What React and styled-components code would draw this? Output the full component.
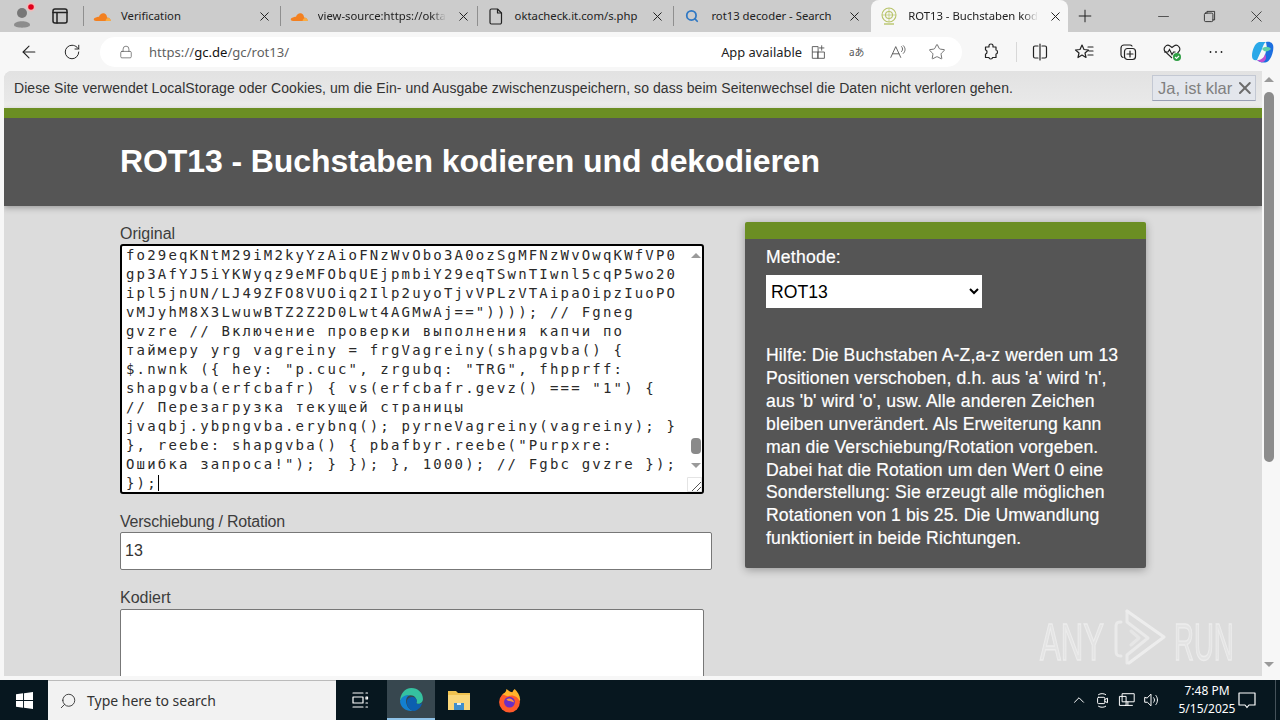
import React from "react";
import styled, { createGlobalStyle } from "styled-components";
import { ArrowLeft, RotateCw, Lock, X, Plus, Minus, Star, Search, ChevronUp } from "lucide-react";

const Global = createGlobalStyle`
  html, body { margin: 0; padding: 0; overflow: hidden; }
  body { font-family: "Liberation Sans", Arial, sans-serif; }
  * { box-sizing: border-box; }
`;

const Shell = styled.div`
  width: 1280px;
  height: 720px;
  display: flex;
  flex-direction: column;
  position: relative;
  overflow: hidden;
  background: #f7f7f7;
`;

/* barra de pestanas */
const TabStrip = styled.div`
  height: 32px;
  flex: none;
  display: flex;
  align-items: stretch;
  background: #cccccc;
  font-family: "Noto Sans", sans-serif;
  font-size: 11.3px;
  color: #222;
`;
const StripLeft = styled.div`
  width: 84px;
  flex: none;
  display: flex;
  align-items: center;
  padding-left: 10px;
  gap: 14px;
  position: relative;
  &::after {
    content: "";
    position: absolute;
    right: 0;
    top: 6px;
    height: 20px;
    width: 1px;
    background: #8f8f8f;
  }
`;
const Tab = styled.div`
  width: 196.8px;
  flex: none;
  display: flex;
  align-items: center;
  padding: 0 9px;
  gap: 10px;
  position: relative;
  background: ${p => (p.$active ? "#f7f7f7" : "transparent")};
  border-radius: ${p => (p.$active ? "8px 8px 0 0" : "0")};
  &::after {
    content: "";
    display: ${p => (p.$sep ? "block" : "none")};
    position: absolute;
    right: 0;
    top: 6px;
    height: 20px;
    width: 1px;
    background: #8f8f8f;
  }
`;
const FavSlot = styled.span`
  width: 18px;
  flex: none;
  display: flex;
  justify-content: center;
`;
const TabTitle = styled.span`
  flex: 1;
  margin-bottom: 2px;
  white-space: nowrap;
  -webkit-mask-image: ${p => (p.$fade ? "linear-gradient(to right, #000 88%, transparent 100%)" : "none")};
  mask-image: ${p => (p.$fade ? "linear-gradient(to right, #000 88%, transparent 100%)" : "none")};
`;
const TabSpacer = styled.div`
  flex: 1;
  display: flex;
  align-items: center;
  padding-left: 7px;
`;
const WinButtons = styled.div`
  margin-left: auto;
  display: flex;
  align-items: center;
  gap: 29px;
  padding-right: 14px;
  color: #222;
`;

/* barra de direccion */
const Toolbar = styled.div`
  height: 39px;
  flex: none;
  display: flex;
  align-items: center;
  background: #f7f7f7;
  padding-left: 19px;
  color: #222;
`;
const NavIcons = styled.div`
  width: 81px;
  flex: none;
  display: flex;
  align-items: center;
  gap: 24px;
`;
const Address = styled.div`
  width: 862px;
  height: 30px;
  flex: none;
  display: flex;
  align-items: center;
  background: #fff;
  border-radius: 15px;
  padding: 0 16px 0 19px;
  font-family: "Noto Sans", sans-serif;
`;
const Url = styled.span`
  margin-left: 16px;
  color: #5f5f5f;
  font-size: 13.1px;
  b { color: #111; font-weight: 400; }
`;
const AppAvail = styled.span`
  margin-left: auto;
  font-size: 12.9px;
  color: #222;
  margin-right: 7.5px;
`;
const AddressIcons = styled.div`
  display: flex;
  align-items: center;
  gap: 21.5px;
  color: #555;
`;
const ToolIcons = styled.div`
  display: flex;
  align-items: center;
  margin-left: 19px;
  gap: 24px;
`;
const ToolSep = styled.div`
  width: 1px;
  height: 20px;
  background: #d8d8d8;
  margin: 0 -11px 0 -9px;
`;

/* viewport */
const Viewport = styled.div`
  flex: 1;
  min-height: 0;
  display: flex;
  padding: 0 4px 4px 4px;
`;
const Page = styled.div`
  width: 1258px;
  flex: none;
  overflow: hidden;
  background: #dcdcdc;
  border-radius: 8px 0 0 0;
`;
const CookieBar = styled.div`
  height: 37px;
  display: flex;
  align-items: center;
  justify-content: space-between;
  padding: 0 6px 3px 10px;
  background: linear-gradient(#e2e2e2, #e8e8e8 80%, #f1f1ef);
  font-size: 14px;
  letter-spacing: 0.065px;
  color: #333;
`;
const KlarButton = styled.div`
  width: 104px;
  height: 26px;
  display: flex;
  align-items: center;
  gap: 3px;
  padding-left: 5px;
  background: #e3e6ec;
  border: 1px solid #c3c8d3;
  border-bottom-color: #9aa0b4;
  font-size: 16.5px;
  letter-spacing: 0;
  color: #808080;
  white-space: nowrap;
`;
const Hero = styled.header`
  height: 98px;
  background: #555555;
  border-top: 10px solid #6b8e23;
  box-shadow: 0 2px 6px rgba(0, 0, 0, 0.3);
  padding: 24px 0 0 116px;
  position: relative;
`;
const Title = styled.h1`
  margin: 0;
  font-size: 32px;
  line-height: 38px;
  font-weight: 700;
  letter-spacing: -0.1px;
  color: #fff;
`;
const Columns = styled.div`
  display: flex;
  align-items: flex-start;
  gap: 33px;
  padding: 16px 0 0 116px;
`;
const LeftCol = styled.div`
  width: 592px;
  flex: none;
  padding-top: 2px;
`;
const Label = styled.label`
  display: block;
  height: 20px;
  font-size: 16px;
  line-height: 20px;
  color: #3c3c3c;
  margin-top: ${p => p.$top || 0}px;
  letter-spacing: ${p => (p.$tight ? "-0.22px" : "0")};
`;
const CodeBox = styled.div`
  width: 584px;
  height: 250px;
  display: flex;
  background: #fff;
  border: 2px solid #000;
  border-radius: 3px;
  overflow: hidden;
  position: relative;
`;
const CodeText = styled.div`
  flex: 1;
  padding: 0 0 0 4px;
  font-family: "DejaVu Sans Mono", monospace;
  font-size: 14px;
  letter-spacing: 2.17px;
  line-height: 19px;
  color: #2a2a2a;
  white-space: pre;
  overflow: hidden;
`;
const Caret = styled.span`
  display: inline-block;
  width: 1px;
  height: 16px;
  background: #000;
  vertical-align: -3px;
`;
const InnerBar = styled.div`
  width: 16px;
  flex: none;
  position: relative;
`;
const InnerThumb = styled.div`
  position: absolute;
  left: 5px;
  top: 192px;
  width: 10px;
  height: 16px;
  border-radius: 4px;
  background: #8a8a8a;
`;
const Arrow = styled.div`
  position: absolute;
  left: ${p => p.$left}px;
  ${p => (p.$down ? `bottom: ${p.$at}px;` : `top: ${p.$at}px;`)}
  width: 0;
  height: 0;
  border-left: 5px solid transparent;
  border-right: 5px solid transparent;
  ${p => (p.$down ? "border-top" : "border-bottom")}: 5px solid #9a9a9a;
`;
const Grip = styled.svg`
  position: absolute;
  right: 0;
  bottom: 0;
`;
const ShiftInput = styled.input`
  display: block;
  width: 592px;
  height: 38px;
  padding: 0 4px;
  font-family: "Liberation Sans", sans-serif;
  font-size: 16px;
  color: #333;
  background: #fff;
  border: 1px solid #777;
  border-radius: 2px;
  outline: none;
`;
const OutBox = styled.textarea`
  display: block;
  width: 584px;
  height: 130px;
  margin-top: 1px;
  background: #fff;
  border: 1px solid #777;
  border-radius: 2px;
  resize: none;
  outline: none;
`;
const Panel = styled.aside`
  width: 401px;
  flex: none;
  height: 346px;
  background: #555555;
  border-top: 17px solid #6b8e23;
  border-radius: 2px;
  box-shadow: 0 2px 8px rgba(0, 0, 0, 0.3);
  padding: 8px 21px 0;
  color: #fff;
  -webkit-text-stroke: 0.2px #fff;
`;
const MethodLabel = styled.div`
  font-size: 17.6px;
  letter-spacing: 0.2px;
  line-height: 20px;
`;
const MethodSelect = styled.select`
  display: block;
  width: 216px;
  height: 33px;
  margin-top: 8px;
  font-family: "Liberation Sans", sans-serif;
  font-size: 17.6px;
  color: #000;
  background: #fff;
  border: 0;
  border-radius: 0;
  padding-left: 1px;
  -webkit-text-stroke: 0;
`;
const Help = styled.p`
  margin: 36px 0 0;
  font-size: 17.6px;
  letter-spacing: 0.12px;
  line-height: 22.9px;
`;
const PageBar = styled.div`
  width: 14px;
  flex: none;
  background: #f7f7f7;
  position: relative;
`;
const PageThumb = styled.div`
  position: absolute;
  left: 2px;
  top: 21px;
  width: 10px;
  height: 370px;
  border-radius: 5px;
  background: #8c8c8c;
`;

/* barra de tareas */
const Taskbar = styled.div`
  height: 40px;
  flex: none;
  display: flex;
  align-items: center;
  background: #07171f;
  color: #fff;
  font-family: "Noto Sans", sans-serif;
`;
const StartCell = styled.div`
  width: 48px;
  flex: none;
  display: flex;
  justify-content: center;
`;
const SearchBox = styled.div`
  width: 288px;
  height: 40px;
  flex: none;
  display: flex;
  align-items: center;
  gap: 10px;
  padding-left: 11px;
  background: #f2f2f2;
  border-top: 1px solid #bbb;
  color: #333;
  font-size: 14px;
`;
const TaskCell = styled.div`
  width: ${p => p.$w || 48}px;
  height: 40px;
  flex: none;
  display: flex;
  align-items: center;
  justify-content: center;
  padding-right: ${p => p.$pr || 0}px;
  background: ${p => (p.$on ? "#37474f" : "transparent")};
  border-bottom: ${p => (p.$on ? "2px solid #8fc3e8" : "none")};
`;
const Tray = styled.div`
  margin-left: auto;
  display: flex;
  align-items: center;
  height: 40px;
`;
const TrayIcons = styled.div`
  display: flex;
  align-items: center;
  gap: 6px;
`;
const Clock = styled.div`
  width: 58px;
  margin-left: 18px;
  text-align: center;
  font-size: 12px;
  line-height: 18px;
  white-space: nowrap;
`;
const NotifyCell = styled.div`
  width: 22px;
  margin-right: 17px;
  display: flex;
  justify-content: center;
`;
const DesktopEdge = styled.div`
  width: 5px;
  height: 40px;
  border-left: 1px solid #45525a;
`;

/* marca de agua sobre la pagina */
const Watermark = styled.div`
  position: absolute;
  left: 1040px;
  top: 608px;
  display: flex;
  align-items: center;
  gap: 8px;
  pointer-events: none;
  opacity: 0.5;
`;
const WatermarkWord = styled.span`
  display: inline-block;
  width: ${p => p.$w}px;
  font-size: 52px;
  line-height: 62px;
  color: rgba(255, 255, 255, 0.45);
  -webkit-text-stroke: 1.4px rgba(255, 255, 255, 0.9);
  transform: translateY(3px) scaleX(${p => p.$sx});
  transform-origin: left center;
  white-space: nowrap;
`;

const Ico = ({ size = 18, sw = 1.2, children, color = "currentColor" }) => (
  <svg width={size} height={size} viewBox="0 0 20 20" fill="none" stroke={color} strokeWidth={sw} strokeLinecap="round" strokeLinejoin="round" style={{ flex: "none" }}>
    {children}
  </svg>
);

const CloudIcon = () => (
  <svg width="18" height="14" viewBox="0 0 18 12">
    <path d="M3 11 C0 11 0 8 3 7.6 C4 6.5 5.5 6.5 6 6.8 C7 3 11 2 13 4.5 C14 6 14 7 14 7.5 C16.5 7.5 18 9.5 17.5 11 Z" fill="#f38020" />
    <path d="M12.5 11 C13 9 14 7.8 15.5 8 C17 8.5 18 10 17.5 11 Z" fill="#fbad41" />
  </svg>
);

const PageIcon = () => (
  <svg width="14" height="17" viewBox="0 0 14 17" fill="none" stroke="#222" strokeWidth="1.2" strokeLinejoin="round">
    <path d="M2.500 1h6l4 4v9.500a1.500 1.500 0 0 1-1.500 1.500h-8.500a1.500 1.500 0 0 1-1.500-1.500v-12a1.500 1.500 0 0 1 1.500-1.500z" />
    <path d="M8.500 1v4h4" />
  </svg>
);

const RotFav = () => (
  <svg width="18" height="20" viewBox="0 0 18 20" fill="none" stroke="#b8c46a" strokeWidth="1.1">
    <circle cx="9" cy="9" r="7" />
    <circle cx="9" cy="9" r="3.5" />
    <path d="M9 2v14M2 9h14" strokeWidth="0.7" />
    <path d="M4 18h10" strokeWidth="1.4" />
  </svg>
);

const AvatarIcon = () => (
  <svg width="30" height="30" viewBox="0 0 30 30" style={{ flex: "none", marginLeft: -4 }}>
    <circle cx="16" cy="12" r="5" fill="#777" />
    <path d="M8 24 C8 19 24 19 24 24 C24 27.500 8 27.500 8 24 Z" fill="#8c8c8c" />
    <circle cx="25" cy="6" r="4.4" fill="#f4b8b8" />
    <circle cx="25" cy="6" r="2.8" fill="#e0001b" />
  </svg>
);

const EdgeIcon = () => (
  <svg width="25" height="25" viewBox="0 0 24 24">
    <path d="M12 1 C18 1 23 5.5 23 11.5 C23 15.5 19 17 16.5 15.5 C18 13 16 8 11 8 C6 8 2 11 1 14 C1 7 5.5 1 12 1 Z" fill="#35c1a0" />
    <path d="M1 14 C2 9 6.5 7.5 10 8 C7 9.5 6 13 7.5 17 C8.5 20 11 22.5 14 23 C7 24 1.5 20 1 14 Z" fill="#1380d0" />
    <path d="M7.5 14 C7.5 10 14 8 16.5 11.5 C17.5 13 17 15 16.5 15.5 C19 17 21 16.5 22.5 15 C21 20 17 23 14 23 C10 22.5 7.5 18 7.5 14 Z" fill="#0c5fb0" />
  </svg>
);

const FolderIcon = () => (
  <svg width="24" height="24" viewBox="0 0 24 24">
    <path d="M1 3h8l2 2h12v17H1z" fill="#f0c24f" />
    <path d="M1 7h22v15H1z" fill="#fad77a" />
    <rect x="7" y="15" width="10" height="7" fill="#3f8fcc" />
    <rect x="10" y="15" width="4" height="2" fill="#dfeefa" />
  </svg>
);

const FoxIcon = () => (
  <svg width="25" height="25" viewBox="0 0 24 24">
    <circle cx="12" cy="13.5" r="10" fill="#ff5a2a" />
    <path d="M5 6 C8 5 9 3 9 1 C12 3 13 4 15 4 C15 3 16 2 17 1 C20 4 23 8 22 13 C20 8 15 6 10 8 Z" fill="#ffb32b" />
    <circle cx="12" cy="13.5" r="5.2" fill="#6a2fc4" />
    <path d="M9 11 C12 9 16 11 16.5 14 C13 12.5 11 13 9 11 Z" fill="#ff9640" />
  </svg>
);

const CopilotIcon = () => (
  <svg width="26" height="26" viewBox="0 0 26 26" style={{ flex: "none" }}>
    <path d="M9 3 C5 4 2 11 2 17 C2 21 5 22 7 21 L12 10 C13 7 14 4 16 3 Z" fill="#2aa8e8" />
    <path d="M16 3 C19 2 22 3 23 6 C24.5 11 21 21 17 23 C14 24 10 24 7 21 C11 22 14 20 15 16 L17 9 Z" fill="#1c6fe0" />
    <path d="M12 10 C14 7 19 7 21 10 C19 12 16 13 14 12 Z" fill="#5fd0a8" />
    <path d="M7 21 C11 21 14 19 15 15 C17 18 16 22 13 23 C11 23.5 9 22.5 7 21 Z" fill="#c14fd0" />
  </svg>
);

const codeLines = [
  "fo29eqKNtM29iM2kyYzAioFNzWvObo3A0ozSgMFNzWvOwqKWfVP0",
  "gp3AfYJ5iYKWyqz9eMFObqUEjpmbiY29eqTSwnTIwnl5cqP5wo20",
  "ipl5jnUN/LJ49ZFO8VUOiq2Ilp2uyoTjvVPLzVTAipaOipzIuoPO",
  'vMJyhM8X3LwuwBTZ2Z2D0Lwt4AGMwAj==")))); // Fgneg',
  "gvzre // Включение проверки выполнения капчи по",
  "таймеру yrg vagreiny = frgVagreiny(shapgvba() {",
  '$.nwnk ({ hey: "p.cuc", zrgubq: "TRG", fhpprff:',
  'shapgvba(erfcbafr) { vs(erfcbafr.gevz() === "1") {',
  "// Перезагрузка текущей страницы",
  "jvaqbj.ybpngvba.erybnq(); pyrneVagreiny(vagreiny); }",
  '}, reebe: shapgvba() { pbafbyr.reebe("Purpxre:',
  'Ошибка запроса!"); } }); }, 1000); // Fgbc gvzre });',
];

const tabs = [
  { title: "Verification", icon: <CloudIcon />, sep: true },
  { title: "view-source:https://okta", icon: <CloudIcon />, sep: true, fade: true },
  { title: "oktacheck.it.com/s.php", icon: <PageIcon />, sep: true },
  { title: "rot13 decoder - Search", icon: <Search size={14} strokeWidth={3} color="#2f78c4" /> },
];

export default function App() {
  return (
    <Shell>
      <Global />
      <TabStrip>
        <StripLeft>
          <AvatarIcon />
          <Ico size={20} sw={1.5}>
            <rect x="3" y="3" width="14" height="14" rx="2" />
            <path d="M3 6.5h14M7 6.5V17" />
          </Ico>
        </StripLeft>
        {tabs.map(t => (
          <Tab key={t.title} $sep={t.sep}>
            <FavSlot>{t.icon}</FavSlot>
            <TabTitle $fade={t.fade}>{t.title}</TabTitle>
            <X size={15} strokeWidth={1.6} style={{ flex: "none" }} />
          </Tab>
        ))}
        <Tab $active>
          <FavSlot><RotFav /></FavSlot>
          <TabTitle $fade>ROT13 - Buchstaben kod</TabTitle>
          <X size={15} strokeWidth={1.6} style={{ flex: "none" }} />
        </Tab>
        <TabSpacer>
          <Plus size={20} strokeWidth={1.2} />
          <WinButtons>
            <Minus size={17} strokeWidth={1} />
            <Ico size={17} sw={1}>
              <rect x="4" y="6" width="10" height="10" rx="1.5" />
              <path d="M7 6V4h9v10h-2" />
            </Ico>
            <X size={19} strokeWidth={1} />
          </WinButtons>
        </TabSpacer>
      </TabStrip>

      <Toolbar>
        <NavIcons>
          <ArrowLeft size={20} strokeWidth={1.3} />
          <RotateCw size={18} strokeWidth={1.3} />
        </NavIcons>
        <Address>
          <Lock size={14} strokeWidth={1.2} color="#555" />
          <Url>https://<b>gc.de</b>/gc/rot13/</Url>
          <AppAvail>App available</AppAvail>
          <AddressIcons>
            <Ico size={18} sw={1}>
              <path d="M3 4h6v13H3zM9 10h7v7H9zM3 10h6M13 3v5M10.5 5.5h5" />
            </Ico>
            <Ico size={18} sw={1}>
              <text x="0" y="14" fontSize="11" stroke="none" fill="#555" fontFamily="Noto Sans, Noto Sans CJK JP">aあ</text>
            </Ico>
            <Ico size={18} sw={1}>
              <path d="M2 16 L7.5 4 L13 16 M4 12h7M14 4c1.5 1.5 1.5 4 0 5.5M16 3c2.5 2.5 2.5 6 0 8.5" />
            </Ico>
            <Star size={18} strokeWidth={1.1} />
          </AddressIcons>
        </Address>
        <ToolIcons>
          <Ico size={20} sw={1.2}>
            <path d="M8 3.5c0-2 4-2 4 0v1.5h3v3c2 0 2 4 0 4v3.5h-3.5c0 2-3.500 2-3.500 0H4.500v-3.500c2 0 2-4 0-4V5H8z" />
          </Ico>
          <ToolSep />
          <Ico size={20} sw={1.2}>
            <path d="M10 2v16M8 4H5a1.500 1.500 0 0 0-1.500 1.500v9A1.500 1.500 0 0 0 5 16h3M12 4h3a1.500 1.500 0 0 1 1.500 1.500v9A1.500 1.500 0 0 1 15 16h-3" />
          </Ico>
          <Ico size={20} sw={1.2}>
            <path d="M8 3 L10 7.500 L14.500 8 L11 11 L12 15.500 L8 13 L4 15.500 L5 11 L1.500 8 L6 7.500 Z M14 5h5M15 9h4M14 13h5" />
          </Ico>
          <Ico size={20} sw={1.2}>
            <path d="M5 15.500A3 3 0 0 1 3 13V6a3 3 0 0 1 3-3h6a2.500 2.500 0 0 1 2 1" />
            <rect x="6.500" y="6.500" width="11" height="11" rx="3" />
            <path d="M12 9v6M9 12h6" />
          </Ico>
          <svg width="20" height="20" viewBox="0 0 20 20" fill="none" stroke="#222" strokeWidth="1.1" style={{ flex: "none" }}>
            <path d="M10 16 L3 9.500 C0.500 6 4.500 1.500 8 4 L10 5.500 L12 4 C15.500 1.500 19.500 6 17 9.500 L15.500 11" />
            <path d="M2 10h4l1.500-2.500 2.500 5 1.500-2.500h2" />
            <circle cx="15" cy="15" r="4" fill="#2f9e44" stroke="none" />
            <path d="M13 15l1.500 1.500 2.500-2.500" stroke="#fff" />
          </svg>
          <Ico size={20} sw={1.8}>
            <path d="M4.500 10h.01M10 10h.01M15.500 10h.01" />
          </Ico>
          <CopilotIcon />
        </ToolIcons>
      </Toolbar>

      <Viewport>
        <Page>
          <CookieBar>
            <span>Diese Site verwendet LocalStorage oder Cookies, um die Ein- und Ausgabe zwischenzuspeichern, so dass beim Seitenwechsel die Daten nicht verloren gehen.</span>
            <KlarButton>
              Ja, ist klar
              <X size={20} strokeWidth={2.4} color="#6c6c6c" />
            </KlarButton>
          </CookieBar>
          <Hero>
            <Title>ROT13 - Buchstaben kodieren und dekodieren</Title>
          </Hero>
          <Columns>
            <LeftCol>
              <Label>Original</Label>
              <CodeBox>
                <CodeText>
                  {codeLines.join("\n")}
                  {"\n"}
                  {"});"}
                  <Caret />
                </CodeText>
                <InnerBar>
                  <Arrow $left={5} $at={7} />
                  <InnerThumb />
                  <Arrow $left={5} $at={24} $down />
                </InnerBar>
                <Grip width="15" height="15" viewBox="0 0 15 15" fill="none" stroke="#555">
                  <path d="M0.500 0.500h14v14h-14z" stroke="#e4e4e4" />
                  <path d="M5 14 L14 5 M10 14 L14 10" />
                </Grip>
              </CodeBox>
              <Label $top={18} $tight>Verschiebung / Rotation</Label>
              <ShiftInput readOnly value="13" />
              <Label $top={18}>Kodiert</Label>
              <OutBox readOnly />
            </LeftCol>
            <Panel>
              <MethodLabel>Methode:</MethodLabel>
              <MethodSelect defaultValue="ROT13">
                <option>ROT13</option>
              </MethodSelect>
              <Help>
                Hilfe: Die Buchstaben A-Z,a-z werden um 13 Positionen verschoben, d.h. aus 'a' wird 'n', aus 'b' wird 'o', usw. Alle anderen Zeichen bleiben unverändert. Als Erweiterung kann man die Verschiebung/Rotation vorgeben. Dabei hat die Rotation um den Wert 0 eine Sonderstellung: Sie erzeugt alle möglichen Rotationen von 1 bis 25. Die Umwandlung funktioniert in beide Richtungen.
              </Help>
            </Panel>
          </Columns>
        </Page>
        <PageBar>
          <Arrow $left={2} $at={6} />
          <PageThumb />
          <Arrow $left={2} $at={9} $down />
        </PageBar>
      </Viewport>

      <Taskbar>
        <StartCell>
          <svg width="17" height="17" viewBox="0 0 18 18" fill="#fff">
            <path d="M0 2.500 L7.500 1.400 V8.500 H0 Z M8.500 1.300 L18 0 V8.500 H8.500 Z M0 9.500 H7.500 V16.600 L0 15.500 Z M8.500 9.500 H18 V18 L8.500 16.700 Z" />
          </svg>
        </StartCell>
        <SearchBox>
          <Search size={18} strokeWidth={1.2} style={{ transform: "scaleX(-1)" }} />
          <span>Type here to search</span>
        </SearchBox>
        <TaskCell $w={51} $pr={3}>
          <Ico size={20} sw={1.2} color="#fff">
            <path d="M3 3h10M3 17h10M3 7h10v6H3zM16 3h1.500M16 7h1.500v2H16zM16 13h1.500M16 17h1.500" />
          </Ico>
        </TaskCell>
        <TaskCell $on>
          <EdgeIcon />
        </TaskCell>
        <TaskCell>
          <FolderIcon />
        </TaskCell>
        <TaskCell $w={52}>
          <FoxIcon />
        </TaskCell>
        <Tray>
          <TrayIcons>
            <ChevronUp size={18} strokeWidth={1.3} />
            <Ico size={18} sw={1.1} color="#fff">
              <rect x="4" y="7" width="8" height="7" rx="1" />
              <path d="M12 9.500l3-1.500v5l-3-1.500M5 4c2-1.500 6-1.500 8 0M5 17c2 1.500 6 1.500 8 0" />
            </Ico>
            <Ico size={18} sw={1.1} color="#fff">
              <path d="M5 3h13v9H5zM2 6h7v10H2zM11 12v4M8 16h8" />
            </Ico>
            <Ico size={18} sw={1.1} color="#fff">
              <path d="M3 7.500v5h3l4 4v-13l-4 4zM13 7.500c1.200 1.500 1.200 3.500 0 5M15.500 5c2.300 3 2.300 7 0 10" />
            </Ico>
          </TrayIcons>
          <Clock>
            7:48 PM
            <br />
            5/15/2025
          </Clock>
          <NotifyCell>
            <Ico size={20} sw={1.2} color="#fff">
              <path d="M2 3h16v12h-6l-2 2.500L8 15H2z" />
            </Ico>
          </NotifyCell>
          <DesktopEdge />
        </Tray>
      </Taskbar>

      <Watermark>
        <WatermarkWord $w={62} $sx={0.6}>ANY</WatermarkWord>
        <svg width="56" height="62" viewBox="0 0 56 62" fill="none" stroke="#fff" strokeWidth="3" strokeLinejoin="round" strokeLinecap="round">
          <path d="M11 14 C6 14 6 16 6 20 V42 C6 47 7 48 11 48" opacity="0.8" />
          <path d="M17 3 L54 29 L19 55" />
          <path d="M17 3 V14 L38 30 L17 47 V55" opacity="0.8" />
          <path d="M21 23 L29 30 L21 37" opacity="0.6" />
        </svg>
        <WatermarkWord $w={58} $sx={0.53}>RUN</WatermarkWord>
      </Watermark>
    </Shell>
  );
}
